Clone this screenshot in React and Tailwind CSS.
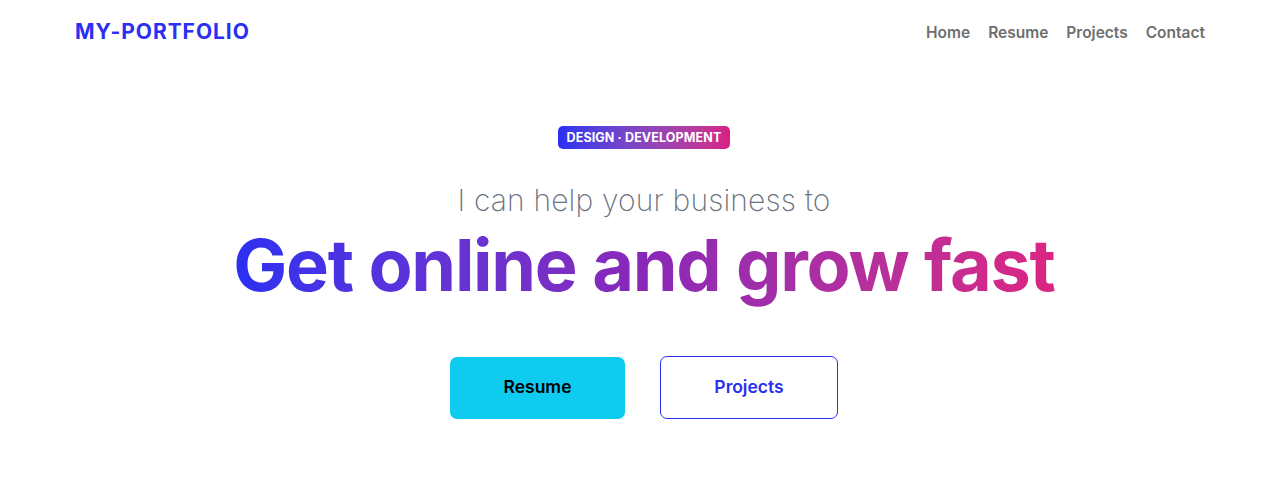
import React from 'react';

function Navbar() {
  const links = ['Home', 'Resume', 'Projects', 'Contact'];
  return (
    <nav className="flex h-16 items-center justify-between pl-[75px] pr-[78px]">
      <a href="#" className="text-[21px] font-bold tracking-[0.045em] text-[#2a2ff2]">
        MY-PORTFOLIO
      </a>
      <ul className="flex items-center gap-[18px]">
        {links.map((l) => (
          <li key={l}>
            <a href="#" className="text-[15.5px] font-semibold text-[#6e6e6e]">
              {l}
            </a>
          </li>
        ))}
      </ul>
    </nav>
  );
}

function Hero() {
  return (
    <section className="flex flex-col items-center pl-[5px] pt-[62px]">
      <span className="rounded-[5px] bg-gradient-to-r from-[#2a2ff2] to-[#d81f85] px-[9px] py-[3px] text-[12.5px] font-bold leading-[17px] tracking-[0.01em] text-white">
        DESIGN · DEVELOPMENT
      </span>
      <p className="mt-[33px] text-[30px] font-extralight leading-[36px] tracking-[0.005em] text-[#6b7280]">
        I can help your business to
      </p>
      <h1 className="mt-[7px] bg-gradient-to-r from-[#2a2ff2] via-[#8a27b8] to-[#dc2482] bg-clip-text pb-3 text-[72px] font-bold leading-[80px] tracking-[-0.018em] text-transparent">
        Get online and grow fast
      </h1>
      <div className="mt-[39px] flex items-center gap-[35px]">
        <button className="h-[62px] w-[175px] rounded-[7px] bg-[#0ecbef] text-[17.5px] font-semibold text-black">
          Resume
        </button>
        <button className="h-[63px] w-[178px] rounded-[7px] border border-[#2a2ff2] text-[17.5px] font-semibold text-[#2a2ff2]">
          Projects
        </button>
      </div>
    </section>
  );
}

export default function App() {
  return (
    <div className="min-h-[488px] bg-white font-['Inter',sans-serif]">
      <Navbar />
      <Hero />
    </div>
  );
}
